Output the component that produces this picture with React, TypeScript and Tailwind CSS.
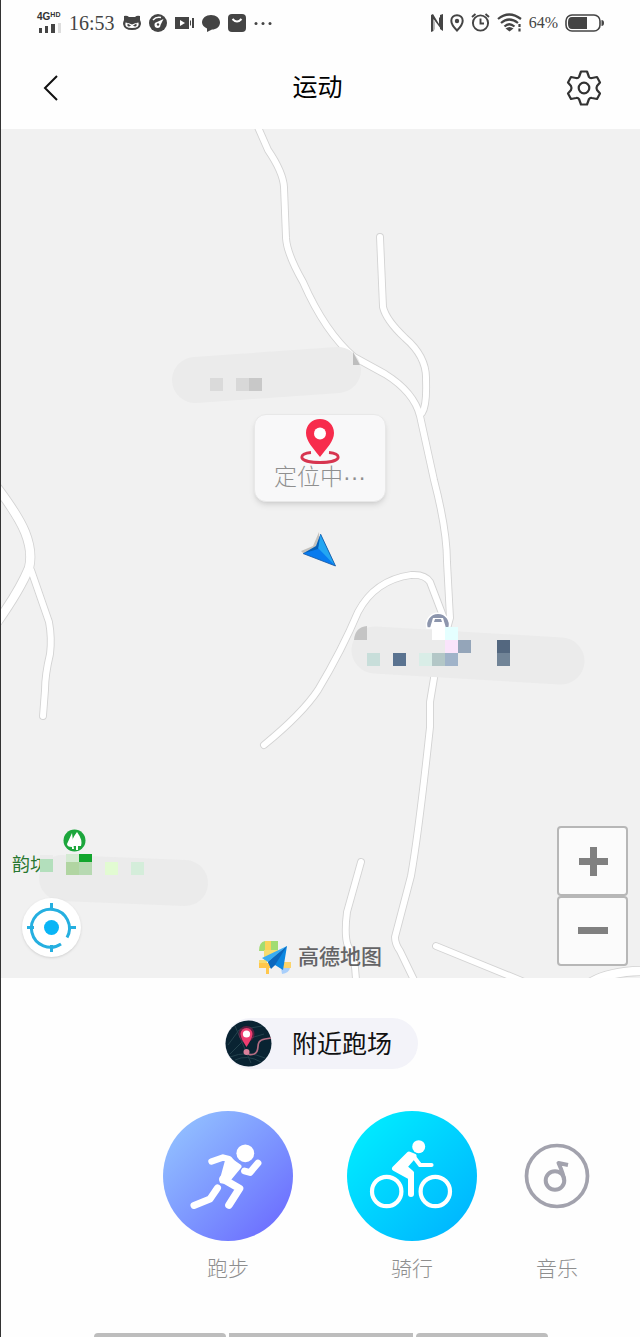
import React from "react";

const roads = [
  "M257 125 L268 150 Q283 172 284 187 L286 238 Q287 254 303 282 Q325 332 354 357 L385 374 Q414 392 420 416 L434 480 Q447 530 447 562 L450 618 L435 672 L430 702 L430 727 Q419 830 411 876 L395 937 Q395 944 400 951 L415 982",
  "M380 237 L383 307 Q386 320 405 338 Q427 357 426 380 Q427 405 422 413",
  "M264 745 Q302 714 318 690 Q342 650 358 612 Q375 580 411 575 Q425 574 430 582 L443 616",
  "M31 570 L49 622 Q52 638 50 654 Q45 675 45 690 L43 716",
  "M361 862 L347 912 Q344 936 348 946 Q356 958 356 984",
  "M436 946 L522 981",
];

const wideRoads = ["M-4 486 Q18 515 25 532 Q33 552 29 568 Q20 590 -4 624", "M584 987 Q604 971 645 971"];

function Pixel({ x, y, w = 13, h = 13, c }: { x: number; y: number; w?: number; h?: number; c: string }) {
  return <rect x={x} y={y} width={w} height={h} fill={c} />;
}

function MapCanvas() {
  return (
    <svg className="absolute inset-0 h-full w-full" viewBox="1 129 639 849" preserveAspectRatio="xMidYMid slice" aria-hidden="true">
      <g fill="none" strokeLinecap="round" strokeLinejoin="round">
        {roads.map((d) => <path key={d} d={d} stroke="#d3d3d3" strokeWidth="7.8" />)}
        {wideRoads.map((d) => <path key={d} d={d} stroke="#d3d3d3" strokeWidth="10" />)}
        {roads.map((d) => <path key={d} d={d} stroke="#fff" strokeWidth="6" />)}
        {wideRoads.map((d) => <path key={d} d={d} stroke="#fff" strokeWidth="8.4" />)}
      </g>
      <path d="M427 628 A11.500 11.500 0 1 1 449 628 Z" fill="#8d96ad" stroke="#fff" strokeWidth="1.500" />
      <path d="M430 628 L433 618 H443 L446 628 Z" fill="#fff" />
      <path d="M434 622 L435 619 H441 L442 622 Z" fill="#8d96ad" />
      <g stroke="#ebebeb" strokeLinecap="round">
        <path d="M195 380 L338 370" strokeWidth="46" />
        <path d="M375 650 L561 661" strokeWidth="47" />
        <path d="M62 878 L185 883" strokeWidth="46" />
      </g>
      <path d="M353 352 V365 H360 Z" fill="#bdbdbd" />
      <Pixel x={210} y={378} c="#dadada" />
      <Pixel x={236} y={378} c="#d8d8d8" />
      <Pixel x={249} y={378} c="#c8c8c8" />
      <path d="M354 640 Q355 627 367 626 V640 Z" fill="#c4c4c4" />
      <Pixel x={432} y={627} c="#fff" />
      <Pixel x={445} y={627} c="#e5ffff" />
      <Pixel x={445} y={640} c="#fae4fb" />
      <Pixel x={458} y={640} c="#94a5b9" />
      <Pixel x={497} y={640} c="#53677f" />
      <Pixel x={497} y={653} c="#718497" />
      <Pixel x={367} y={653} c="#c8deda" />
      <Pixel x={393} y={653} c="#5a7390" />
      <Pixel x={419} y={653} c="#d9ede7" />
      <Pixel x={432} y={653} c="#b3c7c7" />
      <Pixel x={445} y={653} c="#a0b3c9" />
      <circle cx="74.500" cy="840.500" r="11" fill="#1ca63c" />
      <path d="M72 833 L67 844 Q67 847 72 847 V849 H74 Z" fill="#fff" />
      <path d="M77 832 Q70 841 72 846 H76 V850 H78 V846 H81 Q83 840 77 832 Z" fill="#fff" />
      <Pixel x={66} y={854} h={8} c="#d4ead2" />
      <Pixel x={79} y={854} h={8} c="#12a52d" />
      <Pixel x={66} y={862} c="#b1d5a2" />
      <Pixel x={79} y={862} c="#b7d9b2" />
      <Pixel x={105} y={862} c="#e2fbd2" />
      <Pixel x={131} y={862} c="#d4edda" />
    </svg>
  );
}

function StatusBar() {
  return (
    <div className="flex h-[45px] items-center justify-between pl-9 pr-9 text-[#444]">
      <div className="flex items-center gap-2">
        <div className="flex w-6 flex-col gap-px">
          <span className="whitespace-nowrap text-[10px] font-bold leading-[10px] text-[#333]">4G<sup className="text-[7px]">HD</sup></span>
          <svg width="24" height="10" viewBox="0 0 24 10" fill="#444">
            <path d="M2 5h3v5h-3zM8 3h3v7h-3zM14 1h4v9h-4z" /><path d="M21 0h3v10h-3z" fill="#ddd" />
          </svg>
        </div>
        <span className="font-['Liberation_Serif',serif] text-[20px] leading-6">16:53</span>
        <svg width="18" height="16" viewBox="0 0 18 16">
          <path d="M1 1Q4 0 6 2H12Q14 0 17 1V5Q18 7 18 9Q17 15 9 15T0 9Q0 7 1 5Z" fill="#444" />
          <path d="M2.500 7.500Q6 8 9 9.500Q12 8 15.500 7.500Q17 13 9 13T2.500 7.500Z" fill="#fff" />
          <path d="M4.500 8.500L8 10.500Q6 12 4.500 11ZM13.500 8.500L10 10.500Q12 12 13.500 11Z" fill="#444" />
        </svg>
        <svg width="18" height="18" viewBox="0 0 18 18">
          <circle cx="9" cy="9" r="9" fill="#444" />
          <path d="M4 6Q7 2.500 12 3.500" fill="none" stroke="#fff" strokeWidth="1.500" /><path d="M14.500 5L11.500 11A3 3 0 1 1 8 8Z" fill="#fff" /><circle cx="9" cy="10.500" r="1.200" fill="#444" />
        </svg>
        <svg width="19" height="18" viewBox="0 0 19 18">
          <path d="M0 3h14v12H0zM15 7l1-1v6l-1-1zM17 4h2v10h-2z" fill="#444" /><path d="M5 6l5 3-5 3z" fill="#fff" />
        </svg>
        <svg width="18" height="18" viewBox="0 0 18 18"><path d="M9 1c5 0 9 3 9 7.500s-4 7-8 7l-5 2.500v-3.500C2 13 0 11 0 8.500 0 4 4 1 9 1z" fill="#444" /></svg>
        <svg width="18" height="18" viewBox="0 0 18 18"><rect width="18" height="18" rx="4" fill="#444" /><path d="M4.500 5q4.500 5 9 0" fill="none" stroke="#fff" strokeWidth="2" /></svg>
        <svg width="18" height="18" viewBox="0 0 18 18" fill="#444"><circle cx="2" cy="9.500" r="1.500" /><circle cx="9" cy="9.500" r="1.500" /><circle cx="16" cy="9.500" r="1.500" /></svg>
      </div>
      <div className="flex items-center gap-[7px]">
        <svg width="12" height="18" viewBox="0 0 12 18" fill="#444"><path d="M0 1L2 0L8 10V4L10 2V15L2.500 5V17L0 18Z" /><path d="M9 1L12 0V17L9 15Z" /><path d="M2.500 6L4 8V15L2.500 17Z" fill="#bbb" /></svg>
        <svg width="14" height="18" viewBox="0 0 14 18"><path d="M7 1.200c3.300 0 5.700 2.400 5.700 5.500C12.700 10 9.500 14 7 16.500 4.500 14 1.300 10 1.300 6.700 1.300 3.600 3.700 1.200 7 1.200z" fill="none" stroke="#444" strokeWidth="2" /><circle cx="7" cy="7" r="2.200" fill="#444" /></svg>
        <svg width="19" height="19" viewBox="0 0 19 19" fill="none" stroke="#444" strokeWidth="1.900"><circle cx="9.500" cy="10" r="7.600" /><path d="M9.500 5.500V10.500H13M1 4L4.500 1M18 4L14.500 1" /></svg>
        <svg width="25" height="19" viewBox="0 0 25 19" fill="none" stroke="#444" strokeWidth="2.200"><path d="M1 6Q12 -3 24 6M4 10Q12 3 21 10M7.500 13.500Q12 9 17.500 13.500" /><path d="M8.500 15.500Q12.500 12.500 16.500 15.500L12.500 18.500Z" fill="#444" stroke="none" /><path d="M22.500 11v3M22.500 15.500v3" /></svg>
        <span className="font-['Liberation_Serif',serif] text-[16px] leading-6">64%</span>
        <svg width="39" height="18" viewBox="0 0 39 18"><rect x="1" y="1" width="34" height="16" rx="6" fill="#fff" stroke="#444" strokeWidth="1.600" /><path d="M22 3H7Q3 3 3 8V10Q3 15 7 15H22Z" fill="#444" /><path d="M36.500 6Q39 6 39 9T36.500 12Z" fill="#444" /></svg>
      </div>
    </div>
  );
}

function RunIcon() {
  return (
    <svg className="h-full w-full" viewBox="0 0 130 130" fill="none" stroke="#fff" strokeLinecap="round" strokeLinejoin="round">
      <circle cx="82.300" cy="42.300" r="8.900" fill="#fff" stroke="none" />
      <path d="M48.500 50.500L60 46.500L66 48L71 54" strokeWidth="6.400" />
      <path d="M65 48L76 55.500L64 70L59 70Z" fill="#fff" strokeWidth="5" />
      <path d="M60 68L76.500 77.500L66 94" strokeWidth="7.600" />
      <path d="M54.500 77L47 88L31 94.500" strokeWidth="7" />
      <path d="M81.500 60L87 61.500L95 52" strokeWidth="6.800" />
    </svg>
  );
}

function RideIcon() {
  return (
    <svg className="h-full w-full" viewBox="0 0 130 130" fill="none" stroke="#fff" strokeLinecap="round" strokeLinejoin="round">
      <circle cx="39.700" cy="80.500" r="14.700" strokeWidth="4.200" />
      <circle cx="88.300" cy="80.500" r="14.700" strokeWidth="4.200" />
      <circle cx="71.700" cy="35.700" r="6.500" fill="#fff" stroke="none" />
      <path d="M62 43L67 45L57.500 56L64.500 62L63 66L47.500 57.500Z" fill="#fff" strokeWidth="5" />
      <path d="M64 63V83" strokeWidth="6" />
      <path d="M67 46L73 54H84.500" strokeWidth="4.200" />
    </svg>
  );
}

export default function App() {
  return (
    <div className="flex min-h-screen flex-col border-l border-[#333] bg-[#fefefe] font-['Liberation_Sans','Noto_Sans_CJK_SC',sans-serif]">
      <StatusBar />
      <header className="flex h-[84px] items-center justify-between pl-8 pr-[38px] pt-0.5">
        <button type="button" aria-label="返回" className="flex size-9 items-center justify-center">
          <svg width="16" height="26" viewBox="0 0 16 26" fill="none" stroke="#111" strokeWidth="2"><path d="M14 1L2 13L14 25" /></svg>
        </button>
        <h1 className="text-[25px] font-normal text-black">运动</h1>
        <button type="button" aria-label="设置" className="flex size-9 items-center justify-center">
          <svg width="36" height="36" viewBox="0 0 36 36" fill="none" stroke="#333" strokeWidth="2.200" strokeLinejoin="round">
            <path d="M15 1.500H21L23 7Q24 8.500 26 8L31 7L34 12.500L31 16Q30 18 31 20L34 23.500L31 29L26 28Q24 27.500 23 29L21 34.500H15L13 29Q12 27.500 10 28L5 29L2 23.500L5 20Q6 18 5 16L2 12.500L5 7L10 8Q12 8.500 13 7Z" />
            <circle cx="18" cy="18" r="5.300" />
          </svg>
        </button>
      </header>

      <main className="relative min-h-[600px] flex-1 overflow-hidden bg-[#f1f1f1]">
        <MapCanvas />
        <div className="absolute left-[11px] top-[724px] flex items-center">
          <span className="whitespace-nowrap text-[18px] leading-6 text-[#28772f]">韵坊</span>
          <span className="-ml-2 flex h-5 items-center bg-[#ebebeb]">
            <span className="size-[13px] bg-[#b3dfbc]" />
          </span>
        </div>
        <div className="absolute left-[253px] top-[285px] flex h-[88px] w-[132px] flex-col items-center rounded-xl border border-[#e8e8e8] bg-[#f8f8f9] pt-1 shadow-md">
          <svg width="40" height="46" viewBox="0 0 40 46">
            <path d="M11 33.500C5 34 1 36 2 39C5 45 35 45 38 39C39 36 35 34 29 33.500" fill="none" stroke="#d73550" strokeWidth="2.800" />
            <path d="M20 0C28 0 34 6 34 14C34 22 27 29 20 38C13 29 6 22 6 14C6 6 12 0 20 0Z" fill="#f72c4c" />
            <circle cx="20" cy="14.500" r="6" fill="#fff" />
          </svg>
          <span className="-mt-1 whitespace-nowrap text-[23px] font-light leading-8 text-[#8f8f8f]">定位中···</span>
        </div>
        <svg className="absolute left-[299px] top-[402px]" width="38" height="38" viewBox="0 0 38 38">
          <path d="M19 1L13 15L1 20L4 23L20 16Z" fill="#c4c2be" />
          <path d="M20.500 3L17 16L3 22.500L35.500 35Z" fill="#087bef" />
          <path d="M20.500 3L18 17L35.500 35Z" fill="#22a6f2" />
          <path d="M20.500 3L16 15L3 22.500L18 18Z" fill="#0560b8" />
          <path d="M20.500 3L35.500 35L3 22.500" fill="none" stroke="#1454a0" strokeWidth=".8" />
        </svg>

        <button type="button" aria-label="定位" className="absolute bottom-[21px] left-[21px] flex size-[59px] items-center justify-center rounded-full bg-white shadow">
          <svg width="49" height="49" viewBox="0 0 49 49" fill="none" stroke="#25afe0" strokeWidth="3">
            <path d="M34 41A19 19 0 1 1 40 34.500" />
            <path d="M24.500 0V7M24.500 42V49M0 24.500H7M42 24.500H49" />
            <circle cx="24.500" cy="24.500" r="7.500" fill="#09b5f6" stroke="none" />
          </svg>
        </button>

        <div className="absolute bottom-[4px] left-[257px] flex items-center gap-1.5">
          <svg width="34" height="34" viewBox="0 0 34 34">
            <path d="M1 11Q1 2 7 1H20V11Z" fill="#a1dc72" /><path d="M7 1H13V10H7Z" fill="#f9d35b" />
            <path d="M6 10H20V18H9V25H1V20H6Z" fill="#f7dc70" /><path d="M1 23H14V28H11V34H8V28H1Z" fill="#ffc74b" /><path d="M24 22H33V28H24Z" fill="#fbd46a" /><path d="M23 28H32Q31 33 24 34Z" fill="#a8cffb" />
            <path d="M29 6L4 18L10 22Z" fill="#38acf3" /><path d="M29 6L10 22L13 28L17 25L25 30Z" fill="#0b86e0" /><path d="M29 6L10 22L13 29L17 25Z" fill="#0a66bd" />
          </svg>
          <span className="text-[21px] font-medium leading-8 text-[#646466]">高德地图</span>
        </div>

        <div className="absolute bottom-3 right-3 flex w-[71px] flex-col">
          <button type="button" aria-label="放大" className="flex h-[70px] items-center justify-center rounded-sm border-2 border-[#b7b7b7] bg-[#fbfbfb]">
            <svg width="30" height="30" viewBox="0 0 30 30" fill="#808080"><path d="M12 1H19V12H30V19H19V30H12V19H1V12H12Z" /></svg>
          </button>
          <button type="button" aria-label="缩小" className="flex h-[70px] items-center justify-center rounded-sm border-2 border-[#b7b7b7] bg-[#fbfbfb]">
            <svg width="30" height="30" viewBox="0 0 30 30" fill="#808080"><path d="M0 11H30V18H0Z" /></svg>
          </button>
        </div>
      </main>

      <section className="flex flex-col">
        <button type="button" className="ml-[224px] mt-10 flex h-[51px] w-[193px] items-center gap-5 rounded-full bg-[#f3f3f9]">
          <svg className="shrink-0" width="47" height="47" viewBox="0 0 47 47">
            <circle cx="23.500" cy="23.500" r="23" fill="#092332" />
            <path d="M3 25L14 10L37 6M5 34L19 20L39 14M5 37Q22 30 40 38M10 40Q22 34 36 42M10 6L26 43" fill="none" stroke="#24424d" strokeWidth="1" />
            <path d="M22 32Q23 36 29 34C37 31 28 21 40 19L46 18" fill="none" stroke="#b46c82" strokeWidth="1.700" />
            <circle cx="21.500" cy="14" r="8" fill="#ec1858" opacity=".35" />
            <path d="M15.500 14A6 6 0 0 1 27.500 14Q27 19 21.500 27Q16 19 15.500 14Z" fill="#ed3d70" />
            <circle cx="21.500" cy="14" r="3.600" fill="#fff" /><circle cx="21.500" cy="32" r="3" fill="#db809b" />
          </svg>
          <span className="whitespace-nowrap text-[25px] leading-8 text-[#111]">附近跑场</span>
        </button>

        <nav className="mt-[42px] flex justify-end pr-[50px]">
          <button type="button" className="mr-[54px] flex w-[130px] flex-col items-center gap-3">
            <span className="h-[130px] w-full rounded-full bg-linear-to-br from-[#92bfff] from-10% to-[#6f73ff] to-85%"><RunIcon /></span>
            <span className="text-[21px] font-light leading-8 text-[#8e8e8e]">跑步</span>
          </button>
          <button type="button" className="mr-[47px] flex w-[130px] flex-col items-center gap-3">
            <span className="h-[130px] w-full rounded-full bg-linear-to-br from-[#00e8ff] from-15% to-[#00b6ff] to-90%"><RideIcon /></span>
            <span className="text-[21px] font-light leading-8 text-[#8e8e8e]">骑行</span>
          </button>
          <button type="button" className="flex w-[66px] flex-col items-center gap-3">
            <span className="flex h-[130px] items-center">
              <svg width="66" height="66" viewBox="0 0 66 66" fill="none" stroke="#a2a2ad" strokeWidth="3.700">
                <circle cx="33" cy="33" r="30.500" /><circle cx="31" cy="37.500" r="9.300" strokeWidth="4" /><path d="M40 37.500Q40 32 34.500 20L44 22" strokeWidth="4" strokeLinejoin="round" />
              </svg>
            </span>
            <span className="text-[21px] font-light leading-8 text-[#8e8e8e]">音乐</span>
          </button>
        </nav>
        <div className="mt-12 flex justify-center gap-[3px]">
          <span className="h-1 w-[132px] rounded-t-sm bg-[#bdbdbd]" />
          <span className="h-1 w-[184px] bg-[#bdbdbd]" />
          <span className="h-1 w-[132px] rounded-t-sm bg-[#bdbdbd]" />
        </div>
      </section>
    </div>
  );
}
